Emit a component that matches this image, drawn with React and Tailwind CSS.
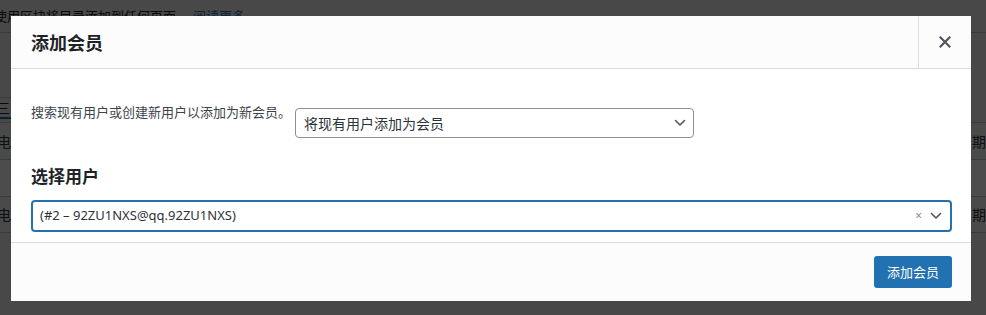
import React from "react";

const CJK = { fontFamily: '"Noto Sans CJK SC", "Noto Sans", sans-serif' };
const UI = { fontFamily: '"Noto Sans", "Noto Sans CJK SC", sans-serif' };

function Chevron({ className }) {
  return (
    <svg className={className} width="12" height="8" viewBox="0 0 12 8" fill="none">
      <path d="M1.5 1.5 L6 6 L10.5 1.5" stroke="#50575e" strokeWidth="1.6" strokeLinecap="round" strokeLinejoin="round" />
    </svg>
  );
}

export default function App() {
  return (
    <div className="relative w-[986px] h-[315px] overflow-hidden bg-[#f0f0f1]" style={CJK}>
      {/* page behind */}
      <div className="flex flex-col">
        <div className="h-[33px] flex items-center text-[13px] text-[#1d2327] ml-[-6px] border-b border-[#c3c4c7]">
          <span>使用区块将目录添加到任何页面。</span>
          <span className="ml-[4px] text-[#2271b1]">阅读更多</span>
        </div>
        <div className="h-[64px]" />
        <div className="flex">
          <div className="w-[60px] h-[22px] flex items-center border-t border-[#c3c4c7] border-b-2 border-b-[#2271b1] text-[14px] text-[#1d2327]">
            <span className="ml-[-4px]">三</span>
          </div>
        </div>
        <div className="h-[4px] border-b border-[#c3c4c7]" />
        <div className="h-[37px] flex items-center justify-between bg-[#f6f7f7] border-b border-[#c3c4c7] text-[14px] text-[#2c3338]">
          <span className="ml-[-3px]">电子</span>
          <span>日期</span>
        </div>
        <div className="h-[37px] bg-white border-b border-[#c3c4c7]" />
        <div className="h-[36px] flex items-center justify-between bg-[#f6f7f7] border-b border-[#c3c4c7] text-[14px] text-[#2c3338]">
          <span className="ml-[-3px]">电子</span>
          <span>日期</span>
        </div>
      </div>

      {/* backdrop */}
      <div className="absolute inset-0 bg-black/70" />

      {/* modal */}
      <div className="absolute left-[11px] top-[16px] w-[960px] bg-white">
        <div className="flex h-[53px] bg-[#fcfcfc] border-b border-[#dcdcde]">
          <div className="flex-1 flex items-center pl-[20px] text-[18px] font-bold text-[#1d2327]">添加会员</div>
          <div className="w-[53px] flex items-center justify-center border-l border-[#dcdcde]">
            <svg width="12" height="12" viewBox="0 0 12 12">
              <path d="M1.5 1.5 L10.5 10.5 M10.5 1.5 L1.5 10.5" stroke="#50575e" strokeWidth="2.2" strokeLinecap="square" />
            </svg>
          </div>
        </div>

        <div className="pl-[20px] pr-[19px] pt-[34px] pb-[10px]">
          <div className="flex items-start">
            <div className="w-[264px] text-[13px] leading-[18px] text-[#3c434a]">搜索现有用户或创建新用户以添加为新会员。</div>
            <div className="mt-[5px] w-[399px] h-[30px] flex items-center justify-between border border-[#8c8f94] rounded-[4px] pl-[8px] pr-[7px] text-[14px] text-[#2c3338]">
              <span>将现有用户添加为会员</span>
              <Chevron />
            </div>
          </div>

          <div className="mt-[26px] text-[17px] leading-[24px] font-bold text-[#1d2327]">选择用户</div>

          <div className="mt-[12px] h-[32px] flex items-center border-2 border-[#2271b1] rounded-[4px] pl-[7px] pr-[8px] text-[13px] text-[#2c3338]">
            <span className="flex-1" style={UI}>(#2 – 92ZU1NXS@qq.92ZU1NXS)</span>
            <span className="text-[12px] text-[#8c8f94] mr-[8px] leading-none" style={UI}>×</span>
            <Chevron />
          </div>
        </div>

        <div className="flex justify-end h-[59px] bg-[#fcfcfc] border-t border-[#dcdcde] pt-[13px] pr-[19px]">
          <div className="h-[32px] w-[78px] flex items-center justify-center rounded-[3px] bg-[#2271b1] text-white text-[13px]">添加会员</div>
        </div>
      </div>
    </div>
  );
}
